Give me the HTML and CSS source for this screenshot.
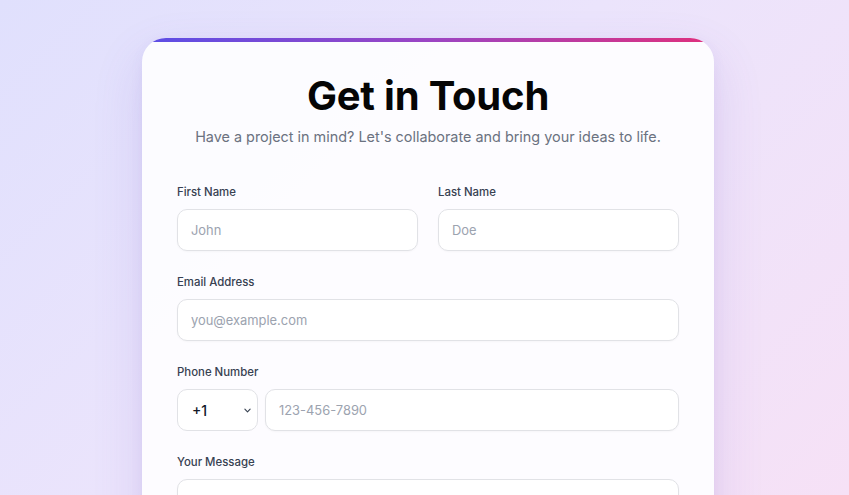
FILE: index.html
```html
<!DOCTYPE html>
<html lang="en">
<head>
<meta charset="utf-8">
<title>Get in Touch</title>
<link rel="stylesheet" href="styles.css">
</head>
<body>
<main class="page">
  <form class="card">
    <div class="card-bar"></div>
    <h1 class="title">Get in Touch</h1>
    <p class="subtitle">Have a project in mind? Let's collaborate and bring your ideas to life.</p>

    <div class="row two">
      <div class="field">
        <label class="label">First Name</label>
        <input class="input" type="text" placeholder="John">
      </div>
      <div class="field">
        <label class="label">Last Name</label>
        <input class="input" type="text" placeholder="Doe">
      </div>
    </div>

    <div class="field">
      <label class="label">Email Address</label>
      <input class="input" type="email" placeholder="you@example.com">
    </div>

    <div class="field">
      <label class="label">Phone Number</label>
      <div class="phone">
        <div class="select">
          <span>+1</span>
          <svg class="chev" viewBox="0 0 8 5" width="7" height="5"><path d="M1 1l3 3 3-3" fill="none" stroke="#374151" stroke-width="1.3" stroke-linecap="round" stroke-linejoin="round"/></svg>
        </div>
        <input class="input grow" type="tel" placeholder="123-456-7890">
      </div>
    </div>

    <div class="field">
      <label class="label">Your Message</label>
      <textarea class="input area" rows="5"></textarea>
    </div>
  </form>
</main>
</body>
</html>
```
FILE: styles.css
```css
html, body {
  margin: 0;
  padding: 0;
  height: 100%;
}
body {
  font-family: Inter, "Noto Sans", sans-serif;
  background: linear-gradient(135deg, #e0e0fd 0%, #ebe4fc 45%, #f6e1f6 100%);
  overflow: hidden;
}
.page {
  display: flex;
  justify-content: center;
  padding: 38px 0 0 7px;
}
.card {
  position: relative;
  width: 572px;
  box-sizing: border-box;
  padding: 34px 35px 40px;
  background: rgba(253, 253, 255, 0.96);
  border-radius: 24px;
  overflow: hidden;
  box-shadow: 0 20px 50px rgba(110, 80, 190, 0.16), 0 4px 14px rgba(110, 80, 190, 0.06);
  display: flex;
  flex-direction: column;
  gap: 21px;
}
.card-bar {
  position: absolute;
  top: 0;
  left: 0;
  right: 0;
  height: 4px;
  background: linear-gradient(90deg, #5b4ee6 0%, #9b45c4 50%, #df2f7c 100%);
}
.title {
  margin: 0;
  text-align: center;
  font-size: 40px;
  line-height: 48px;
  font-weight: 700;
  color: #050505;
  letter-spacing: -0.2px;
}
.subtitle {
  margin: -15px 0 13px;
  text-align: center;
  font-size: 14.4px;
  line-height: 22px;
  color: #6b7280;
}
.row.two {
  display: grid;
  grid-template-columns: 1fr 1fr;
  gap: 20px;
}
.field {
  display: flex;
  flex-direction: column;
  gap: 7px;
}
.label {
  font-size: 11.4px;
  line-height: 20px;
  color: #374151;
  font-weight: 500;
}
.input {
  box-sizing: border-box;
  height: 42px;
  width: 100%;
  padding: 0 13px;
  border: 1px solid #e1e2e6;
  border-radius: 10px;
  background: #fff;
  font-family: inherit;
  font-size: 12.9px;
  color: #111827;
  outline: none;
  box-shadow: 0 1px 2px rgba(0,0,0,0.03);
}
.input::placeholder {
  color: #9ca3af;
}
.phone {
  display: flex;
  gap: 7px;
}
.select {
  box-sizing: border-box;
  width: 81px;
  height: 42px;
  flex: none;
  display: flex;
  align-items: center;
  justify-content: space-between;
  padding: 0 6px 0 14px;
  border: 1px solid #e1e2e6;
  border-radius: 10px;
  background: #fff;
  font-size: 14px;
  font-weight: 500;
  color: #111827;
}
.grow {
  flex: 1;
}
.area {
  height: 120px;
  resize: none;
  padding-top: 12px;
}
```
